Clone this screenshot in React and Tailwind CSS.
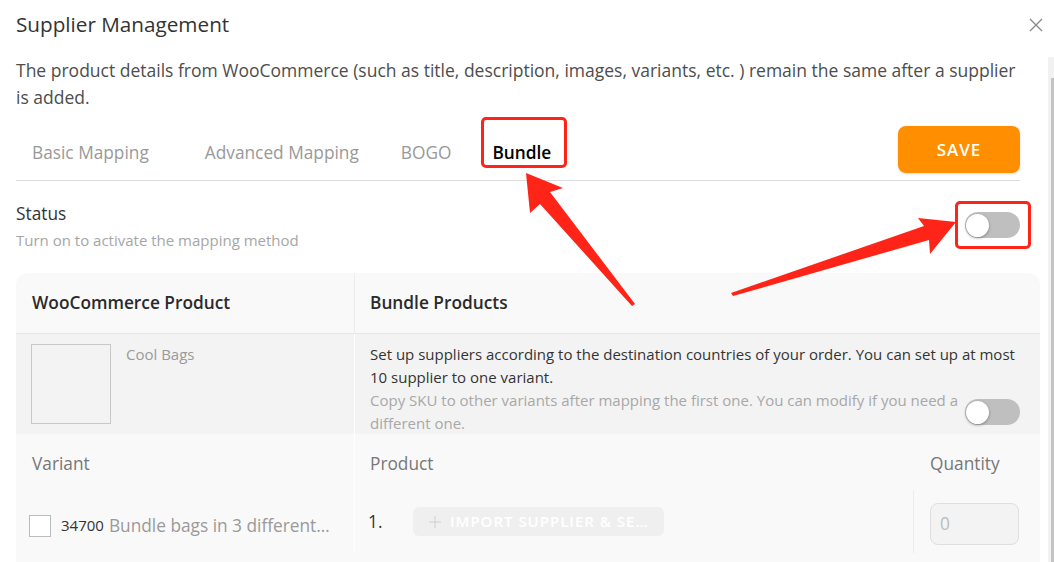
import React from 'react';

// annotation arrows drawn over the screenshot (page coordinates)
const ARROW_UP = '526,173 563,188 550,192 635,304 632,306 540,204 530,213';
const ARROW_RIGHT = '956,222 918,218 924,226 731,293 733,296 929,240 930,254';

const Toggle = () => (
  <div className="relative w-[55px] h-[26px] rounded-full bg-[#bfbfbf] shrink-0">
    <div className="absolute left-[1px] top-[2px] w-[23px] h-[23px] rounded-full bg-white shadow-[0_1px_3px_rgba(0,0,0,0.35)]" />
  </div>
);

export default function App() {
  return (
    <div className="relative w-[1054px] h-[562px] overflow-hidden bg-white font-['Open_Sans',sans-serif] text-[#333]">
      {/* header */}
      <div className="flex items-start justify-between h-[57px] pl-4 pr-[11px]">
        <div className="pt-[10px] text-[20.7px] leading-7 font-medium text-[#333]">Supplier Management</div>
        <svg width="14" height="14" viewBox="0 0 14 14" className="mt-[18px]">
          <path d="M1 1L13 13M13 1L1 13" stroke="#8a8a8a" strokeWidth="1.4" fill="none" />
        </svg>
      </div>

      <div className="flex h-[505px]">
        {/* scroll body */}
        <div className="flex-1 pl-4 pr-2 overflow-hidden">
          <p className="pr-5 text-[17.5px] leading-[27px] text-[#4d4d4d]">
            The product details from WooCommerce (such as title, description, images, variants, etc. ) remain the same after a supplier is added.
          </p>

          {/* tabs */}
          <div className="relative mt-[15px] mr-5 h-[55px] flex items-start justify-between border-b border-[#dcdcdc]">
            <div className="flex items-center h-[54px] text-[17.3px] text-[#999]">
              <span className="ml-4">Basic Mapping</span>
              <span className="ml-[56px]">Advanced Mapping</span>
              <span className="ml-[42px]">BOGO</span>
              <span className="relative ml-[41px] font-semibold text-black">
                Bundle
                <span className="absolute -left-[11px] -top-[23px] w-[86px] h-[51px] border-[3px] border-[#ff2418] rounded-[5px]" />
              </span>
            </div>
            <button className="w-[122px] h-[47px] rounded-lg bg-[#ff8f00] text-white text-[17px] font-semibold tracking-[1px] shadow-[0_1px_3px_rgba(0,0,0,0.12)]">
              SAVE
            </button>
          </div>

          {/* status */}
          <div className="mt-[21px] mr-5 flex items-start justify-between">
            <div>
              <div className="text-[17.3px] leading-6 text-[#333]">Status</div>
              <div className="mt-1 text-[15px] leading-5 text-[#a6a6a6]">Turn on to activate the mapping method</div>
            </div>
            <div className="relative mt-[10px]">
              <Toggle />
              <span className="absolute -left-[10px] -top-[11px] w-[76px] h-[48px] border-[3px] border-[#ff2418] rounded-[5px]" />
            </div>
          </div>

          {/* table */}
          <div className="mt-[23px] rounded-t-xl overflow-hidden">
            <div className="grid grid-cols-[339px_1fr] h-[61px] bg-[#f9f9f9] border-b border-[#e6e6e6]">
              <div className="flex items-center pl-4 border-r border-[#ececec] text-[17.3px] font-semibold text-[#2a2a2a]">WooCommerce Product</div>
              <div className="flex items-center pl-[15px] text-[17.3px] font-semibold text-[#2a2a2a]">Bundle Products</div>
            </div>

            <div className="grid grid-cols-[339px_1fr] h-[100px] bg-[#f3f3f3] overflow-hidden">
              <div className="flex gap-[15px] pl-[15px] pt-[10px] border-r border-white">
                <div className="w-[80px] h-[80px] border border-[#c8c8c8] shrink-0" />
                <div className="text-[15px] leading-5 text-[#9a9a9a]">Cool Bags</div>
              </div>
              <div className="pl-[15px] pr-5 pt-[9px] text-[15px] leading-[23px]">
                <p className="text-[#333]">
                  Set up suppliers according to the destination countries of your order. You can set up at most 10 supplier to one variant.
                </p>
                <div className="flex items-center gap-1">
                  <p className="flex-1 text-[#a8a8a8]">
                    Copy SKU to other variants after mapping the first one. You can modify if you need a different one.
                  </p>
                  <Toggle />
                </div>
              </div>
            </div>

            <div className="bg-[#f9f9f9] pb-6">
              <div className="grid grid-cols-[339px_559px_1fr] h-[60px] text-[17.3px] text-[#777]">
                <div className="flex items-center pl-4 border-r border-white">Variant</div>
                <div className="flex items-center pl-[15px]">Product</div>
                <div className="flex items-center pl-4">Quantity</div>
              </div>
              <div className="grid grid-cols-[339px_559px_1fr] h-[59px]">
                <div className="flex items-center pl-[13px] pr-5 border-r border-white pt-1">
                  <span className="w-[22px] h-[22px] border border-[#bdbdbd] bg-white shrink-0" />
                  <span className="ml-[10px] text-[15px] text-[#333]">34700</span>
                  <span className="ml-[5px] text-[17.3px] text-[#9a9a9a] truncate">Bundle bags in 3 different colors</span>
                </div>
                <div className="flex items-center pl-[13px] border-r border-[#ececec] -mt-1">
                  <span className="w-[45px] text-[17.3px] text-[#333]">1.</span>
                  <div className="flex items-center w-[251px] h-[29px] rounded-md bg-[#efefef] pl-4 pr-4 gap-[9px]">
                    <svg width="12" height="12" viewBox="0 0 12 12" className="shrink-0">
                      <path d="M6 0V12M0 6H12" stroke="#cfcfcf" strokeWidth="1" fill="none" />
                    </svg>
                    <span className="text-[15px] font-semibold tracking-[1px] text-white truncate">IMPORT SUPPLIER &amp; SETTINGS</span>
                  </div>
                </div>
                <div className="flex items-center pl-4">
                  <div className="w-[89px] h-[42px] rounded-lg border border-[#dedede] bg-[#f3f3f3] flex items-center pl-[9px] text-[17.3px] text-[#bcbcbc]">0</div>
                </div>
              </div>
            </div>
          </div>
        </div>

        {/* scrollbar */}
        <div className="w-[6px] bg-[#f1f1f1] pt-[21px]">
          <div className="ml-[3px] w-[3px] h-full bg-[#c4c4c4]" />
        </div>
      </div>

      <svg className="absolute inset-0 pointer-events-none" width="1054" height="562">
        <polygon points={ARROW_UP} fill="#ff2418" />
        <polygon points={ARROW_RIGHT} fill="#ff2418" />
      </svg>
    </div>
  );
}
